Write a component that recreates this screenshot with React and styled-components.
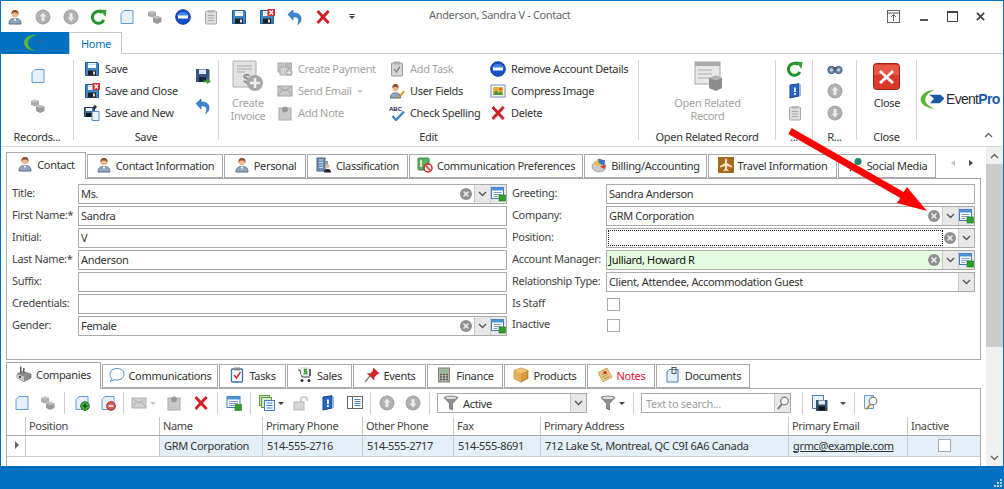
import React from "react";
import styled, { createGlobalStyle } from "styled-components";

const Blue = "#0070c0";
const Line = "#ababab";

const Global = createGlobalStyle`
  html, body { margin: 0; padding: 0; background: #fff; }
  body { font-family: "Noto Sans", "Liberation Sans", sans-serif; font-size: 11px; letter-spacing: -0.33px; color: #333; }
  * { box-sizing: border-box; }
`;

const Svg = styled.svg`
  display: block;
  flex: none;
  ${(p) => p.$off && "filter: grayscale(1); opacity: .85;"}
`;

const floppyBase = (
  <>
    <path d="M1.5 1.5h12l1 1v12h-13z" fill="#3f86c6" stroke="#1f5c99" />
    <rect x="4" y="2" width="8" height="5" fill="#fff" />
    <rect x="4" y="3.4" width="8" height=".7" fill="#9cc" />
    <rect x="4" y="9.5" width="8" height="5" fill="#222" />
    <rect x="9" y="10.5" width="2" height="3" fill="#ddd" />
  </>
);
const pagePath = <path d="M5 1.5h9v13H2V4.5z" fill="#e6f1fb" stroke="#5f9fd6" />;

const shapes = {
  person: (
    <>
      <path d="M2 15c0-4 2-5.5 6-5.5s6 1.500 6 5.500z" fill="#8ea6bf" stroke="#5b6f85" />
      <path d="M6.500 9.500h3L8 12.500z" fill="#fff" />
      <circle cx="8" cy="5" r="3.300" fill="#eab78f" />
      <path d="M4.500 6C4 2.500 5.500 1 8 1s4 1.500 3.500 5C11 3.800 10 3.400 8 3.400S5 3.800 4.500 6z" fill="#8a4f26" />
    </>
  ),
  up: (
    <>
      <circle cx="8" cy="8" r="7" fill="#a3a3a3" stroke="#8c8c8c" />
      <path d="M8 3.500 11.500 7.500H9.500V12h-3V7.500H4.500z" fill="#e8e8e8" />
    </>
  ),
  down: (
    <>
      <circle cx="8" cy="8" r="7" fill="#a3a3a3" stroke="#8c8c8c" />
      <path d="M8 12.500 4.500 8.500H6.500V4h3v4.500h2z" fill="#e8e8e8" />
    </>
  ),
  refresh: (
    <>
      <path d="M12.800 11A6 6 0 1 1 11 3.500" fill="none" stroke="#23922a" strokeWidth="3" />
      <path d="M8.500 0.500 15.500 1 14.500 8z" fill="#2fa52f" />
    </>
  ),
  page: pagePath,
  cubes: (
    <>
      <path d="M1 3 5 1.500 9 3v4L5 8.500 1 7z" fill="#9f9f9f" />
      <path d="M6 8.500 10 7l4.500 1.500v4.500L10 15l-4-2z" fill="#8a8a8a" />
      <path d="M6 8.500 10 10l4.500-1.500L10 7z" fill="#b5b5b5" />
      <path d="M1 3 5 4.500 9 3 5 1.500z" fill="#bdbdbd" />
    </>
  ),
  minus: (
    <>
      <circle cx="8" cy="8" r="7.300" fill="#1450c8" stroke="#0c3a99" />
      <path d="M2 7a6.500 6.500 0 0 1 12 0z" fill="#5c9af0" opacity=".7" />
      <rect x="3" y="6.500" width="10" height="3" fill="#fff" />
    </>
  ),
  clip: (
    <>
      <rect x="2.500" y="2" width="11" height="13" rx="1" fill="#d8d8d8" stroke="#9b9b9b" />
      <rect x="5" y="1" width="6" height="2.500" fill="#aaa" />
      <path d="M5 6.500h6M5 9h6M5 11.500h6" stroke="#999" />
    </>
  ),
  floppy: floppyBase,
  floppyX: (
    <>
      {floppyBase}
      <rect x="8.500" y="0" width="7.500" height="7" fill="#d32f2f" />
      <path d="m10.500 1.500 3.500 4m0-4-3.500 4" stroke="#fff" strokeWidth="1.300" />
    </>
  ),
  floppyNew: (
    <>
      <path d="M0.500 2.500h10v9h-10z" fill="#3f6fa3" stroke="#1f3f66" />
      <rect x="2" y="8" width="6" height="3.500" fill="#111" />
      <rect x="2" y="3" width="6" height="3" fill="#fff" />
      <path d="M8 6.500h7v9H8z" fill="#eaf3fb" stroke="#4d8fca" />
      <path d="M11 0v4M9 2h4" stroke="#111" strokeWidth="1.200" />
    </>
  ),
  floppyGo: (
    <>
      <path d="M1 1h12.500l1 1v12H1z" fill="#33557f" />
      <rect x="4" y="1.500" width="7" height="4.500" fill="#dfe8f2" />
      <rect x="4" y="9" width="7" height="5" fill="#16263c" />
      <path d="M8.500 12.500h3.500v-2.500l4 3.500-4 2.500v-1.500H8.500z" fill="#3fa535" />
    </>
  ),
  undo: (
    <path d="M1 5.500 6 1v3c5.500-.5 8.500 2.500 8 6.500-.3 2-1.500 4-3.500 5 1-1.500 1.500-3 1-5-.5-2-2.500-3-5.500-2.500V11z" fill="#3d86d0" stroke="#1d5ea3" strokeWidth=".6" />
  ),
  redX: <path d="M1.500 3 3.500 1 8 5.700 12.700 1 14.700 3 10 8l4.700 5-2 2L8 10.300 3.500 15l-2-2L6 8z" fill="#cf2027" />,
  cash: (
    <>
      <rect x="1" y="3" width="14" height="10" fill="#c9c9c9" stroke="#a5a5a5" />
      <path d="m1 13 4-6h6l4 6M1 3l7 5 7-5" fill="none" stroke="#a5a5a5" />
    </>
  ),
  note: (
    <>
      <rect x="2" y="3" width="12" height="12" fill="#c9c9c9" stroke="#aaa" />
      <circle cx="8" cy="4.500" r="3" fill="#9a9a9a" />
    </>
  ),
  payment: (
    <>
      <rect x="1" y="2" width="6" height="9" fill="#c8c8c8" stroke="#aaa" />
      <rect x="8.500" y="2" width="6" height="6" fill="#bbb" stroke="#aaa" />
      <rect x="3" y="6" width="8" height="8" fill="#d0d0d0" stroke="#aaa" />
      <circle cx="12" cy="11.500" r="3.500" fill="#b5b5b5" />
      <path d="M10 11.500h4M12 9.500v4" stroke="#eee" />
    </>
  ),
  task: (
    <>
      <rect x="2.500" y="2" width="11" height="13" rx="1" fill="#d5d5d5" stroke="#999" />
      <rect x="5" y="0.500" width="6" height="3" fill="#aaa" />
      <path d="m5 8 2.500 3L11 5.500" fill="none" stroke="#8a8a8a" strokeWidth="1.400" />
    </>
  ),
  userEdit: (
    <>
      <path d="M1.500 15c0-4 2-5 5-5s5 1 5 5z" fill="#8ea6bf" stroke="#5b6f85" />
      <circle cx="6.500" cy="5.500" r="3" fill="#eab78f" />
      <path d="M3.500 5.500C3 2 5 1 6.500 1s3.500 1 3 4.500C9 3.500 4 3.500 3.500 5.500z" fill="#8a4f26" />
      <path d="m9 14 5.500-6 1 1L10 15z" fill="#e3a41c" stroke="#a6710a" strokeWidth=".5" />
    </>
  ),
  spell: (
    <>
      <text x="0" y="5.500" fontSize="6" fontWeight="700" letterSpacing="0" fill="#223" fontFamily="Liberation Sans">ABC</text>
      <path d="M3.500 11 7 15 15 6.500" fill="none" stroke="#3d86d0" strokeWidth="2.400" />
    </>
  ),
  image: (
    <>
      <rect x="1" y="2" width="14" height="12" fill="#fff" stroke="#6f8fb5" />
      <rect x="3" y="4" width="10" height="8" fill="#e3b23c" />
      <path d="m3 12 3-5 3 3 2-2 2 4z" fill="#4d9a3a" />
      <circle cx="10.500" cy="6" r="1.200" fill="#d9531e" />
    </>
  ),
  bookBlue: (
    <>
      <path d="M3 2 12 .8V13l-9 2z" fill="#2a66c5" stroke="#173f86" />
      <path d="M12 1.500h2V13l-2 .5z" fill="#9ab8e0" />
      <rect x="7" y="4.500" width="1.800" height="4.500" fill="#fff" />
      <rect x="7" y="10" width="1.800" height="1.800" fill="#fff" />
    </>
  ),
  binoc: (
    <>
      <circle cx="4.500" cy="9" r="3.700" fill="#6a86ad" stroke="#4c6488" />
      <circle cx="11.500" cy="9" r="3.700" fill="#6a86ad" stroke="#4c6488" />
      <rect x="6.500" y="6" width="3" height="3" fill="#555" />
      <circle cx="4.500" cy="9" r="1.500" fill="#c8d6e8" />
      <circle cx="11.500" cy="9" r="1.500" fill="#c8d6e8" />
    </>
  ),
  classify: (
    <>
      <rect x="1" y="1" width="8" height="13" fill="#6f8fb5" stroke="#4c6488" />
      <path d="M3 3h4M3 5.500h4M3 8h4M3 10.500h4" stroke="#c9d8ea" />
      <rect x="9" y="4" width="3" height="5" fill="#9a9a9a" />
      <circle cx="11.500" cy="9" r="2" fill="#eab78f" />
      <path d="M8 15.500c0-2.500 1-3.500 3.500-3.500s3.500 1 3.500 3.500z" fill="#222" />
    </>
  ),
  noComm: (
    <>
      <rect x="1" y="1" width="11" height="12" rx="1" fill="#57b05a" stroke="#3e8c41" />
      <path d="M4 3v7" stroke="#fff" strokeWidth="1.500" />
      <circle cx="11" cy="11" r="4" fill="#fff" stroke="#d8232a" strokeWidth="1.500" />
      <path d="m8.500 8.500 5 5" stroke="#d8232a" strokeWidth="1.500" />
    </>
  ),
  billing: (
    <>
      <ellipse cx="8" cy="9.500" rx="7" ry="5.500" fill="#c9c9c9" stroke="#888" strokeWidth=".6" />
      <path d="M3 8 7 1.500 14 3.500 13 9z" fill="#f2b632" />
      <path d="M7 1.500 14 3.500 13 9 8 6z" fill="#3177cc" />
      <path d="M9 9.500 14.500 8l-1 4z" fill="#d8342c" />
    </>
  ),
  travel: (
    <>
      <rect x="0" y="0" width="16" height="16" fill="#a66a1c" />
      <path d="M8 1.500c.7 0 1 1 1 2v2.500l5 3v1.500l-5-1.500v3l1.500 1.200v1L8 13.500l-2.500.7v-1L7 12V9l-5 1.500V9l5-3V3.500c0-1 .3-2 1-2z" fill="#f5e3c0" />
    </>
  ),
  pin: (
    <>
      <path d="M3 14 9 7" stroke="#444" strokeWidth="1.200" />
      <circle cx="11" cy="4.500" r="3.500" fill="#18896a" />
    </>
  ),
  factory: (
    <>
      <path d="M1 8 6 5.500 15 8v4L8 15.500 1 12z" fill="#8b8b8b" stroke="#555" strokeWidth=".6" />
      <path d="M1 8 8 10.500V15.500L1 12z" fill="#c9c9c9" />
      <rect x="4" y="0.500" width="1.600" height="6" fill="#666" />
      <rect x="7" y="2" width="1.600" height="5" fill="#666" />
      <rect x="3" y="10" width="2" height="2" fill="#555" />
    </>
  ),
  bubble: (
    <path d="M8 1.500c4 0 7 2.300 7 5.700s-3 5.800-7 5.800c-1 0-2 0-3-.3L1.500 14.500l1.200-3C1.500 10.300 1 8.800 1 7.200 1 3.800 4 1.500 8 1.500z" fill="#fff" stroke="#4a8ccc" />
  ),
  tasks: (
    <>
      <rect x="2.500" y="2" width="11" height="13" rx="1" fill="#fff" stroke="#3b6ea8" strokeWidth="1.300" />
      <rect x="5" y="0.500" width="6" height="3" fill="#8a8a8a" />
      <path d="m5 8 2.500 3L11.500 5" fill="none" stroke="#d62a2a" strokeWidth="1.500" />
    </>
  ),
  sales: (
    <>
      <path d="M1 3h2l2 7h8" fill="none" stroke="#333" />
      <rect x="4" y="1" width="8" height="7" fill="#fff" stroke="#aaa" strokeWidth=".5" />
      <circle cx="5" cy="13.500" r="1.500" fill="#333" />
      <circle cx="12" cy="13.500" r="1.500" fill="#333" />
      <path d="M10 2.500H7.500v2h2v2H6.500" fill="none" stroke="#2a9a2a" strokeWidth="1.500" />
      <path d="M13 2v7" stroke="#333" strokeWidth="1.500" />
    </>
  ),
  pushpin: (
    <>
      <path d="M1 15 6 9" stroke="#777" strokeWidth="1.200" />
      <path d="M9.500 1 15 6.500l-2 .7-3 3 .2 2.800L3.500 6.500l2.800.2 3-3z" fill="#df2020" stroke="#9b1414" strokeWidth=".5" />
    </>
  ),
  calc: (
    <>
      <rect x="2.500" y="1" width="11" height="14" fill="#b5b5a8" stroke="#7f7f73" />
      <rect x="4" y="2.500" width="8" height="3" fill="#8fbf8f" />
      <path d="M4 7.500h2M7 7.500h2M10 7.500h2M4 10h2M7 10h2M10 10h2M4 12.500h2M7 12.500h2M10 12.500h2" stroke="#555" strokeWidth="1.300" />
    </>
  ),
  box: (
    <>
      <path d="M8 1 15 3.500v8L8 15 1 11.500v-8z" fill="#d9973a" stroke="#9a6114" strokeWidth=".6" />
      <path d="M1 3.500 8 6.500 15 3.500 8 1z" fill="#f0c274" />
      <path d="M8 6.500V15L1 11.500v-8z" fill="#e9ad55" />
    </>
  ),
  noteCard: (
    <>
      <path d="M1 5.500 10 1l5 9-9 5z" fill="#eac88a" stroke="#a67f3a" strokeWidth=".6" />
      <path d="m4.500 8 5-2.500M5.500 10l5-2.500M7 12l5-2.500" stroke="#a67f3a" strokeWidth=".7" />
      <circle cx="8" cy="5.500" r="1.600" fill="#d22" />
    </>
  ),
  doc: (
    <>
      <path d="M4 2.500h9v12.500H2V5z" fill="#e6f1fb" stroke="#3e7cbf" />
      <rect x="7" y="0.500" width="4" height="6" fill="none" stroke="#555" />
    </>
  ),
  addDoc: (
    <>
      {pagePath}
      <circle cx="11" cy="11" r="4.300" fill="#3fb23f" stroke="#24761f" />
      <path d="M8.500 11h5M11 8.500v5" stroke="#10320f" strokeWidth="1.200" />
    </>
  ),
  delDoc: (
    <>
      {pagePath}
      <circle cx="11" cy="11" r="4.300" fill="#df5b5b" stroke="#a02424" />
      <path d="M8.500 11h5" stroke="#fff" strokeWidth="1.500" />
    </>
  ),
  tableAdd: (
    <>
      <rect x="1" y="1.500" width="13" height="11" fill="#fff" stroke="#3f7ec0" />
      <rect x="1" y="1.500" width="13" height="3" fill="#4c92d8" />
      <path d="M3 6.500h9M3 8.500h9M3 10.500h5" stroke="#7d9dbf" />
      <rect x="9" y="9.500" width="6.500" height="6" fill="#2e9e2e" stroke="#1f7a1f" strokeWidth=".6" />
    </>
  ),
  multi: (
    <>
      <rect x="0.500" y="0.500" width="10" height="10" fill="#cfe6b8" stroke="#5c9a3a" />
      <rect x="2.500" y="2.500" width="10" height="10" fill="#d7ead0" stroke="#5c9a3a" />
      <rect x="5.500" y="5.500" width="10" height="10" fill="#fff" stroke="#3f7ec0" />
      <path d="M7.500 8h6M7.500 10.500h6M7.500 13h6" stroke="#3f7ec0" strokeWidth="1.200" />
    </>
  ),
  lockOpen: (
    <>
      <rect x="1" y="7" width="10" height="8" fill="#cfcfcf" stroke="#aaa" />
      <path d="M8 7V3.500C8 1.500 14 1 14 4v2" fill="none" stroke="#aaa" strokeWidth="1.300" />
    </>
  ),
  detail: (
    <>
      <rect x="0.500" y="1.500" width="15" height="12" fill="#fff" stroke="#666" />
      <path d="M5.500 1.500v12" stroke="#666" />
      <path d="M7.500 4.500h6M7.500 6.500h6M7.500 8.500h6M7.500 10.500h6" stroke="#3f7ec0" />
    </>
  ),
  funnel: (
    <>
      <path d="M1 2.500C4 .5 12 .5 15 2.500L9.500 8.500V15l-3-1.500v-5z" fill="#8f8f8f" stroke="#555" strokeWidth=".6" />
      <ellipse cx="8" cy="2.700" rx="5.500" ry="1.300" fill="#ddd" />
    </>
  ),
  saveLayout: (
    <>
      <rect x="0.500" y="0.500" width="11" height="13" fill="#e6f1fb" stroke="#4d7eb5" />
      <rect x="4" y="5" width="11.500" height="11" fill="#34506f" />
      <rect x="6.500" y="5.500" width="6.500" height="4" fill="#e2e8ef" />
      <rect x="6.500" y="11.500" width="6.500" height="4" fill="#111" />
    </>
  ),
  searchDoc: (
    <>
      <path d="M1.500.5h9v13h-9z" fill="#e6f1fb" stroke="#5f9fd6" />
      <circle cx="10" cy="6" r="3.800" fill="#fff" stroke="#7a7a7a" strokeWidth="1.200" />
      <path d="M7.500 9 3.500 14.500" stroke="#c98a2c" strokeWidth="2" />
    </>
  ),
  magnify: (
    <>
      <circle cx="9.500" cy="6" r="3.800" fill="#f4f4f4" stroke="#7a7a7a" strokeWidth="1.200" />
      <path d="M6.800 9 3 14" stroke="#7a7a7a" strokeWidth="2" />
    </>
  ),
  addSmall: (
    <>
      <rect x="0.500" y="0.500" width="12" height="11" fill="#fff" stroke="#3f7ec0" />
      <rect x="0.500" y="0.500" width="12" height="3" fill="#4c92d8" />
      <path d="M2.500 5.500h8M2.500 7.500h8M2.500 9.500h4" stroke="#7d9dbf" />
      <rect x="8" y="8" width="6.500" height="6" fill="#2e9e2e" stroke="#1f7a1f" strokeWidth=".6" />
    </>
  ),
  clear: (
    <>
      <circle cx="6" cy="6" r="6" fill="#8f8f8f" />
      <path d="m3.500 3.500 5 5m0-5-5 5" stroke="#f2f2f2" strokeWidth="1.500" />
    </>
  ),
};

const Ico = ({ n, s = 16, off, box = 16 }) => (
  <Svg $off={off} width={s} height={s} viewBox={`0 0 ${box} ${box}`} aria-hidden="true">
    {shapes[n]}
  </Svg>
);

const Window = styled.div`
  width: 1004px;
  height: 489px;
  display: flex;
  flex-direction: column;
  border: 1px solid ${Blue};
  border-bottom: 0;
  overflow: hidden;
  position: relative;
`;

const TitleBar = styled.div`
  height: 31px;
  display: flex;
  align-items: center;
  position: relative;
  flex: none;
`;

const QuickBtn = styled.div`
  width: 28px;
  height: 28px;
  display: flex;
  align-items: center;
  justify-content: center;
`;

const Caret = styled.span`
  display: inline-block;
  width: 0;
  height: 0;
  border-left: 3px solid transparent;
  border-right: 3px solid transparent;
  border-top: 3px solid ${(p) => p.$c || "#444"};
  flex: none;
`;

const QuickMenu = styled.div`
  width: 6px;
  margin-left: 12px;
  display: flex;
  flex-direction: column;
  align-items: center;
  border-top: 1px solid #555;
  padding-top: 1px;
`;

const Title = styled.div`
  position: absolute;
  left: 428px;
  top: 6px;
  font-size: 11px;
  line-height: 16px;
  color: #666;
  white-space: nowrap;
`;

const WinBtns = styled.div`
  margin-left: auto;
  display: flex;
  align-items: center;
  padding-right: 18px;
  gap: 18px;
`;

const PinBtn = styled.div`
  margin-right: 2px;
`;

const TabsBar = styled.div`
  height: 22px;
  display: flex;
  border-bottom: 1px solid #c8c8c8;
  flex: none;
`;

const FileTab = styled.div`
  width: 68px;
  height: 22px;
  background: ${Blue};
  display: flex;
  align-items: center;
  justify-content: center;
`;

const HomeTab = styled.div`
  width: 53px;
  height: 22px;
  background: #fff;
  border: 1px solid #c8c8c8;
  border-bottom: 0;
  color: #0072c6;
  padding-left: 11px;
  line-height: 21px;
`;

const Ribbon = styled.div`
  height: 93px;
  display: flex;
  padding-top: 4px;
  border-bottom: 1px solid #d8d8d8;
  flex: none;
  background: #fff;
`;

const Group = styled.div`
  width: ${(p) => p.$w}px;
  height: 86px;
  display: flex;
  flex-direction: column;
  position: relative;
  flex: none;
  &::after {
    content: "";
    position: absolute;
    right: 0;
    top: 2px;
    bottom: 4px;
    width: 1px;
    background: #d6d6d6;
  }
`;

const GroupBody = styled.div`
  height: 72px;
  display: flex;
  padding-left: ${(p) => p.$pad || 0}px;
  justify-content: ${(p) => (p.$center ? "center" : "flex-start")};
`;

const GroupLabel = styled.div`
  height: 14px;
  line-height: 14px;
  text-align: center;
  padding-right: 1px;
  white-space: nowrap;
  overflow: hidden;
`;

const Column = styled.div`
  width: ${(p) => p.$w}px;
  display: flex;
  flex-direction: column;
  flex: none;
`;

const SmallBtn = styled.div`
  height: 22px;
  display: flex;
  align-items: center;
  gap: 5px;
  white-space: nowrap;
  color: ${(p) => (p.$off ? "#a3a3a3" : "#333")};
  line-height: 20px;
`;

const BtnText = styled.span`
  margin-top: -1px;
`;

const IconStack = styled.div`
  width: ${(p) => p.$w || 30}px;
  display: flex;
  flex-direction: column;
  align-items: center;
  padding-top: ${(p) => p.$top ?? 3}px;
  flex: none;
`;

const IconSlot = styled.div`
  height: ${(p) => p.$h || 30}px;
  display: flex;
  align-items: center;
`;

const LargeBtn = styled.div`
  width: ${(p) => p.$w}px;
  display: flex;
  flex-direction: column;
  align-items: center;
  padding-top: ${(p) => p.$top ?? 2}px;
  text-align: center;
  line-height: 13px;
  flex: none;
  color: ${(p) => (p.$off ? "#a3a3a3" : "#333")};
  span {
    display: block;
    margin-top: ${(p) => p.$gap ?? 4}px;
  }
`;

const LogoBox = styled.div`
  width: 86px;
  height: 86px;
  position: relative;
  display: flex;
  align-items: flex-start;
  padding: 32px 0 0 2px;
`;

const LogoText = styled.div`
  font-family: "Liberation Sans", sans-serif;
  font-size: 14px;
  letter-spacing: -0.7px;
  line-height: 19px;
  color: #2c2c34;
  b {
    color: #1b5aa8;
  }
`;

const Collapse = styled.div`
  position: absolute;
  right: 10px;
  bottom: 6px;
`;

const Main = styled.div`
  flex: 1;
  display: flex;
  min-height: 0;
`;

const Content = styled.div`
  width: 985px;
  padding: 5px 5px 0;
  display: flex;
  flex-direction: column;
`;

const TabStrip = styled.div`
  height: ${(p) => p.$h}px;
  display: flex;
  align-items: flex-end;
  gap: 1px;
  flex: none;
  position: relative;
  margin-top: ${(p) => p.$mt || 0}px;
`;

const Tab = styled.div`
  width: ${(p) => p.$w}px;
  height: ${(p) => (p.$active ? 27 : 24)}px;
  background: #fff;
  border: 1px solid ${Line};
  border-bottom: ${(p) => (p.$active ? "0" : `1px solid ${Line}`)};
  margin-bottom: ${(p) => (p.$active ? "-1px" : "0")};
  position: relative;
  z-index: ${(p) => (p.$active ? 1 : 0)};
  padding-bottom: ${(p) => (p.$active ? 4 : 2)}px;
  display: flex;
  align-items: center;
  justify-content: center;
  gap: 4px;
  white-space: nowrap;
  color: ${(p) => p.$c || "#333"};
  flex: none;
`;

const TabNav = styled.div`
  margin-left: 14px;
  height: 24px;
  display: flex;
  gap: 14px;
  align-items: center;
  padding-bottom: 2px;
  align-self: flex-start;
`;

const NavArrow = styled.span`
  width: 0;
  height: 0;
  border-top: 3.500px solid transparent;
  border-bottom: 3.500px solid transparent;
  ${(p) => (p.$left ? "border-right: 4px solid #c2c2c2;" : "border-left: 4px solid #444;")}
`;

const FormPanel = styled.div`
  height: 182px;
  border: 1px solid ${Line};
  padding: 5px 5px 0;
  display: grid;
  grid-template-columns: 495px 463px;
  column-gap: 5px;
  flex: none;
`;

const FormCol = styled.div`
  display: flex;
  flex-direction: column;
  gap: 2px;
`;

const Row = styled.div`
  height: 20px;
  display: flex;
  align-items: center;
  margin-top: ${(p) => (p.$tight ? "-1px" : "0")};
`;

const Label = styled.div`
  width: ${(p) => p.$w}px;
  white-space: nowrap;
  flex: none;
  color: #444;
  line-height: 16px;
  padding-bottom: 2px;
`;

const FieldBox = styled.div`
  flex: 1;
  height: 20px;
  border: 1px solid ${Line};
  background: ${(p) => (p.$green ? "#e4fcdf" : "#fff")};
  display: flex;
  align-items: center;
  min-width: 0;
`;

const FieldText = styled.div`
  flex: 1;
  margin: 0 1px;
  height: 16px;
  line-height: 13px;
  white-space: nowrap;
  color: ${(p) => (p.$green ? "#111" : "#333")};
  border: ${(p) => (p.$focus ? "1px dotted #222" : "1px solid transparent")};
`;

const ClearBtn = styled.div`
  width: 12px;
  margin-right: 2px;
  flex: none;
`;

const FieldBtn = styled.div`
  width: 16px;
  height: 18px;
  background: #e8e8e8;
  border-left: 1px solid #c9c9c9;
  display: flex;
  align-items: center;
  justify-content: center;
  flex: none;
`;

const Chevron = ({ c = "#555", up }) => (
  <Svg width="9" height="6" viewBox="0 0 9 6" aria-hidden="true">
    <path d={up ? "M1 5 4.500 1.500 8 5" : "M1 1 4.500 4.500 8 1"} fill="none" stroke={c} strokeWidth="1.400" />
  </Svg>
);

const Field = ({ value, clear, drop, add, green, focus }) => (
  <FieldBox $green={green}>
    <FieldText $focus={focus} $green={green}>{value}</FieldText>
    {clear && (
      <ClearBtn>
        <Ico n="clear" s={12} box={12} />
      </ClearBtn>
    )}
    {drop && (
      <FieldBtn>
        <Chevron />
      </FieldBtn>
    )}
    {add && (
      <FieldBtn>
        <Ico n="addSmall" s={15} box={15} />
      </FieldBtn>
    )}
  </FieldBox>
);

const Check = styled.div`
  width: 13px;
  height: 13px;
  background: #fff;
  border: 1px solid ${Line};
  margin-left: ${(p) => p.$ml || 0}px;
`;

const GridPanel = styled.div`
  flex: 1;
  min-height: 0;
  border: 1px solid ${Line};
  border-bottom: 0;
`;

const Toolbar = styled.div`
  height: 28px;
  display: flex;
  align-items: center;
  padding-left: 2px;
`;

const ToolBtn = styled.div`
  width: ${(p) => p.$w || 26}px;
  height: 24px;
  display: flex;
  align-items: center;
  justify-content: center;
  gap: ${(p) => p.$gap ?? 3}px;
  padding-left: ${(p) => p.$pl || 0}px;
  flex: none;
`;

const ToolSep = styled.div`
  width: 1px;
  height: 22px;
  background: #cfcfcf;
  margin: 0 3px 0 ${(p) => p.$ml ?? 3}px;
  flex: none;
`;

const Combo = styled.div`
  width: 150px;
  height: 20px;
  margin-left: 4px;
  border: 1px solid ${Line};
  display: flex;
  align-items: center;
  gap: 4px;
  padding-left: 5px;
  flex: none;
  > span {
    flex: 1;
  }
`;

const SearchBox = styled.div`
  width: 150px;
  height: 20px;
  margin: 0 11px 0 4px;
  border: 1px solid ${Line};
  display: flex;
  align-items: center;
  color: #a0a0a0;
  padding-left: 4px;
  flex: none;
  > span {
    flex: 1;
  }
`;

const GridRow = styled.div`
  display: grid;
  grid-template-columns: 19px 134px 103px 100px 91px 87px 248px 119px 72px;
  height: ${(p) => p.$h}px;
  border-bottom: 1px solid ${(p) => p.$line};
`;

const HeadCell = styled.div`
  border-right: 1px solid #c9c9c9;
  padding-left: 3px;
  line-height: 17px;
  white-space: nowrap;
  color: #444;
  &:last-child {
    border-right: 0;
  }
`;

const Cell = styled.div`
  border-right: 1px solid #c9c9c9;
  padding-left: ${(p) => (p.$ind ? 8 : 4)}px;
  padding-bottom: 2px;
  background: ${(p) => (p.$sel ? "#e3eff9" : "#fff")};
  display: flex;
  align-items: center;
  justify-content: ${(p) => (p.$mid ? "center" : "flex-start")};
  white-space: nowrap;
  &:last-child {
    border-right: 0;
    padding-left: 0;
  }
`;

const EmailLink = styled.span`
  text-decoration: underline;
`;

const RowMark = styled.span`
  width: 0;
  height: 0;
  border-top: 4px solid transparent;
  border-bottom: 4px solid transparent;
  border-left: 4px solid #666;
`;

const ScrollBar = styled.div`
  width: 17px;
  background: #f0f0f0;
  display: flex;
  flex-direction: column;
  align-items: center;
  flex: none;
`;

const ScrollEnd = styled.div`
  height: 17px;
  width: 100%;
  display: flex;
  align-items: center;
  justify-content: center;
  flex: none;
`;

const ScrollThumb = styled.div`
  width: 100%;
  height: 183px;
  background: #cdcdcd;
  flex: none;
`;

const ScrollGap = styled.div`
  flex: 1;
`;

const StatusBar = styled.div`
  height: 23px;
  margin: 0 -1px;
  background: ${Blue};
  flex: none;
  display: flex;
  justify-content: flex-end;
  align-items: flex-end;
  padding: 0 2px 2px 0;
`;

const Overlay = styled.svg`
  position: absolute;
  left: -1px;
  top: -1px;
  pointer-events: none;
  z-index: 5;
`;

const quick = ["person", "up", "down", "refresh", "page", "cubes", "minus", "clip", "floppy", "floppyX", "undo", "redX"];
const off = new Set(["up", "down", "clip", "cubes"]);

const topTabs = [
  ["Contact", "person", 80, true],
  ["Contact Information", "person", 136],
  ["Personal", "person", 82],
  ["Classification", "classify", 101],
  ["Communication Preferences", "noComm", 174],
  ["Billing/Accounting", "billing", 123],
  ["Travel Information", "travel", 129],
  ["Social Media", "pin", 98],
];

const lowerTabs = [
  ["Companies", "factory", 95, true],
  ["Communications", "bubble", 116],
  ["Tasks", "tasks", 67],
  ["Sales", "sales", 65],
  ["Events", "pushpin", 73],
  ["Finance", "calc", 76],
  ["Products", "box", 82],
  ["Notes", "noteCard", 68, false, "#ee1133"],
  ["Documents", "doc", 94],
];

const columns = ["", "Position", "Name", "Primary Phone", "Other Phone", "Fax", "Primary Address", "Primary Email", "Inactive"];

const Small = ({ n, off: dim, children }) => (
  <SmallBtn $off={dim}>
    <Ico n={n} />
    <BtnText>{children}</BtnText>
  </SmallBtn>
);

export default function App() {
  return (
    <>
      <Global />
      <Window>
        <TitleBar>
          {quick.map((n) => (
            <QuickBtn key={n}>
              <Ico n={n} off={off.has(n)} />
            </QuickBtn>
          ))}
          <QuickMenu>
            <Caret />
          </QuickMenu>
          <Title>Anderson, Sandra V - Contact</Title>
          <WinBtns>
            <PinBtn>
              <Svg width="13" height="13" viewBox="0 0 13 13" aria-hidden="true">
                <rect x=".5" y=".5" width="12" height="12" fill="none" stroke="#666" />
                <path d="M1 3h11M6.500 11V5M4 7l2.500-2.500L9 7" fill="none" stroke="#555" />
              </Svg>
            </PinBtn>
            <Svg width="9" height="9" viewBox="0 0 9 9" aria-hidden="true">
              <rect x="0" y="7" width="8" height="2" fill="#555" />
            </Svg>
            <Svg width="11" height="11" viewBox="0 0 11 11" aria-hidden="true">
              <rect x=".5" y=".5" width="10" height="10" fill="none" stroke="#444" />
              <rect x="0" y="0" width="11" height="2" fill="#444" />
            </Svg>
            <Svg width="9" height="9" viewBox="0 0 10 10" aria-hidden="true">
              <path d="m1 1 8 8m0-8-8 8" stroke="#444" strokeWidth="2" />
            </Svg>
          </WinBtns>
        </TitleBar>

        <TabsBar>
          <FileTab>
            <Svg width="24" height="18" viewBox="0 0 24 18" aria-hidden="true">
              <path d="M14 1C6 0 1 4 1 9s6 8 13 8c-5-1-9-3.500-9-8s4-7 9-8z" fill="#5cb531" />
              <path d="M12 7c3-2 7-2 11-2-1 3-4 6-8 5l2-2z" fill="#1f67b0" />
            </Svg>
          </FileTab>
          <HomeTab>Home</HomeTab>
        </TabsBar>

        <Ribbon>
          <Group $w={73}>
            <GroupBody $center>
              <IconStack>
                <IconSlot><Ico n="page" /></IconSlot>
                <IconSlot><Ico n="cubes" off /></IconSlot>
              </IconStack>
            </GroupBody>
            <GroupLabel>Records...</GroupLabel>
          </Group>

          <Group $w={145}>
            <GroupBody $pad={10}>
              <Column $w={104}>
                <Small n="floppy">Save</Small>
                <Small n="floppyX">Save and Close</Small>
                <Small n="floppyNew">Save and New</Small>
              </Column>
              <IconStack>
                <IconSlot><Ico n="floppyGo" /></IconSlot>
                <IconSlot><Ico n="undo" /></IconSlot>
              </IconStack>
            </GroupBody>
            <GroupLabel>Save</GroupLabel>
          </Group>

          <Group $w={420}>
            <GroupBody>
              <LargeBtn $w={58} $off>
                <Svg width="32" height="32" viewBox="0 0 32 32" aria-hidden="true">
                  <path d="M1 1h23v26H1z" fill="#e2e2e2" stroke="#b0b0b0" />
                  <path d="M5 6h15M5 9h15M5 12h8" stroke="#aaa" />
                  <text x="11" y="23" fontSize="13" fontWeight="700" fill="#8d8d8d" fontFamily="Liberation Sans">$</text>
                  <circle cx="23" cy="23" r="8" fill="#a8a8a8" />
                  <path d="M18 23h10M23 18v10" stroke="#eee" strokeWidth="2.500" />
                </Svg>
                <span>Create<br />Invoice</span>
              </LargeBtn>
              <Column $w={112}>
                <Small n="payment" off>Create Payment</Small>
                <SmallBtn $off><Ico n="cash" /><BtnText>Send Email</BtnText><Caret $c="#c8c8c8" /></SmallBtn>
                <Small n="note" off>Add Note</Small>
              </Column>
              <Column $w={101}>
                <Small n="task" off>Add Task</Small>
                <Small n="userEdit">User Fields</Small>
                <Small n="spell">Check Spelling</Small>
              </Column>
              <Column $w={140}>
                <Small n="minus">Remove Account Details</Small>
                <Small n="image">Compress Image</Small>
                <Small n="redX">Delete</Small>
              </Column>
            </GroupBody>
            <GroupLabel>Edit</GroupLabel>
          </Group>

          <Group $w={137}>
            <GroupBody $center>
              <LargeBtn $w={130} $off>
                <Svg width="32" height="32" viewBox="0 0 32 32" aria-hidden="true">
                  <rect x="3" y="2" width="25" height="22" fill="#e8e8e8" stroke="#a8a8a8" />
                  <rect x="3" y="2" width="25" height="4" fill="#aaa" />
                  <path d="M6 10h14M6 14h14M6 18h12" stroke="#aaa" />
                  <path d="M17 18 24 15.500 30 18v10l-6 3-7-3z" fill="#8d8d8d" />
                  <path d="M17 18 24 20.500 30 18 24 15.500z" fill="#b5b5b5" />
                </Svg>
                <span>Open Related<br />Record</span>
              </LargeBtn>
            </GroupBody>
            <GroupLabel>Open Related Record</GroupLabel>
          </Group>

          <Group $w={37}>
            <GroupBody $center>
              <IconStack $w={36} $top={0}>
                <IconSlot $h={22}><Ico n="refresh" /></IconSlot>
                <IconSlot $h={22}><Ico n="bookBlue" /></IconSlot>
                <IconSlot $h={22}><Ico n="clip" off /></IconSlot>
              </IconStack>
            </GroupBody>
            <GroupLabel>...</GroupLabel>
          </Group>

          <Group $w={44}>
            <GroupBody $center>
              <IconStack $w={43} $top={0}>
                <IconSlot $h={22}><Ico n="binoc" /></IconSlot>
                <IconSlot $h={22}><Ico n="up" off /></IconSlot>
                <IconSlot $h={22}><Ico n="down" off /></IconSlot>
              </IconStack>
            </GroupBody>
            <GroupLabel>R...</GroupLabel>
          </Group>

          <Group $w={60}>
            <GroupBody $center>
              <LargeBtn $w={59} $top={5} $gap={6}>
                <Svg width="28" height="27" viewBox="0 0 28 27" aria-hidden="true">
                  <rect x=".5" y=".5" width="26" height="26" rx="3" fill="#d93a2b" stroke="#9e1f14" />
                  <path d="M1 2h25v10H1z" fill="#ee6a55" opacity=".6" />
                  <path d="m8 7 5.500 5.500L19 7l2 2-5.500 5 5.500 5-2 2-5.500-5L8 21l-2-2 5.500-5L6 9z" fill="#fff" />
                </Svg>
                <span>Close</span>
              </LargeBtn>
            </GroupBody>
            <GroupLabel>Close</GroupLabel>
          </Group>

          <LogoBox>
            <Svg width="27" height="19" viewBox="0 0 27 20" aria-hidden="true">
              <path d="M16 0C7 0 1 5 1 10s6 9 15 10C9 17 6 14 6 10s4-8 10-10z" fill="#5cb531" />
              <path d="M10 5h12l4 4-5 5H11l4-5z" fill="#1b5aa8" />
            </Svg>
            <LogoText>Event<b>Pro</b></LogoText>
            <Collapse><Chevron c="#666" up /></Collapse>
          </LogoBox>
        </Ribbon>

        <Main>
          <Content>
            <TabStrip $h={26}>
              {topTabs.map(([t, n, w, a]) => (
                <Tab key={t} $w={w} $active={a}>
                  <Ico n={n} />
                  {t}
                </Tab>
              ))}
              <TabNav>
                <NavArrow $left />
                <NavArrow />
              </TabNav>
            </TabStrip>

            <FormPanel>
              <FormCol>
                <Row><Label $w={66}>Title:</Label><Field value="Ms." clear drop add /></Row>
                <Row><Label $w={66}>First Name:*</Label><Field value="Sandra" /></Row>
                <Row><Label $w={66}>Initial:</Label><Field value="V" /></Row>
                <Row><Label $w={66}>Last Name:*</Label><Field value="Anderson" /></Row>
                <Row><Label $w={66}>Suffix:</Label><Field /></Row>
                <Row><Label $w={66}>Credentials:</Label><Field /></Row>
                <Row><Label $w={66}>Gender:</Label><Field value="Female" clear drop add /></Row>
              </FormCol>
              <FormCol>
                <Row><Label $w={94}>Greeting:</Label><Field value="Sandra Anderson" /></Row>
                <Row><Label $w={94}>Company:</Label><Field value="GRM Corporation" clear drop add /></Row>
                <Row><Label $w={94}>Position:</Label><Field focus clear drop /></Row>
                <Row><Label $w={94}>Account Manager:</Label><Field value="Julliard, Howard R" green clear drop add /></Row>
                <Row><Label $w={94}>Relationship Type:</Label><Field value="Client, Attendee, Accommodation Guest" drop /></Row>
                <Row><Label $w={94}>Is Staff</Label><Check $ml={1} /></Row>
                <Row $tight><Label $w={94}>Inactive</Label><Check $ml={1} /></Row>
              </FormCol>
            </FormPanel>

            <TabStrip $h={26} $mt={2}>
              {lowerTabs.map(([t, n, w, a, c]) => (
                <Tab key={t} $w={w} $active={a} $c={c}>
                  <Ico n={n} />
                  {t}
                </Tab>
              ))}
            </TabStrip>

            <GridPanel>
              <Toolbar>
                <ToolBtn><Ico n="page" /></ToolBtn>
                <ToolBtn><Ico n="cubes" off /></ToolBtn>
                <ToolSep />
                <ToolBtn $w={27}><Ico n="addDoc" /></ToolBtn>
                <ToolBtn $w={25}><Ico n="delDoc" /></ToolBtn>
                <ToolSep />
                <ToolBtn $w={33}><Ico n="cash" off /><Caret $c="#c8c8c8" /></ToolBtn>
                <ToolBtn $w={28}><Ico n="note" /></ToolBtn>
                <ToolBtn><Ico n="redX" /></ToolBtn>
                <ToolSep />
                <ToolBtn><Ico n="tableAdd" /></ToolBtn>
                <ToolSep />
                <ToolBtn $w={34}><Ico n="multi" /><Caret /></ToolBtn>
                <ToolBtn><Ico n="lockOpen" off /></ToolBtn>
                <ToolBtn $w={28}><Ico n="bookBlue" /></ToolBtn>
                <ToolBtn $w={25}><Ico n="detail" /></ToolBtn>
                <ToolSep />
                <ToolBtn><Ico n="up" off /></ToolBtn>
                <ToolBtn><Ico n="down" off /></ToolBtn>
                <ToolSep />
                <Combo>
                  <Ico n="funnel" />
                  <span>Active</span>
                  <FieldBtn><Chevron /></FieldBtn>
                </Combo>
                <ToolBtn $w={43} $pl={7}><Ico n="funnel" /><Caret /></ToolBtn>
                <ToolSep />
                <SearchBox>
                  <span>Text to search...</span>
                  <FieldBtn><Ico n="magnify" /></FieldBtn>
                </SearchBox>
                <ToolSep $ml={0} />
                <ToolBtn $w={45} $gap={12}><Ico n="saveLayout" /><Caret /></ToolBtn>
                <ToolSep />
                <ToolBtn><Ico n="searchDoc" /></ToolBtn>
              </Toolbar>

              <GridRow $h={19} $line={Line}>
                {columns.map((c, i) => (
                  <HeadCell key={i}>{c}</HeadCell>
                ))}
              </GridRow>
              <GridRow $h={21} $line="#d0d0d0">
                <Cell $ind><RowMark /></Cell>
                <Cell />
                <Cell $sel>GRM Corporation</Cell>
                <Cell $sel>514-555-2716</Cell>
                <Cell $sel>514-555-2717</Cell>
                <Cell $sel>514-555-8691</Cell>
                <Cell $sel>712 Lake St, Montreal, QC C9I 6A6 Canada</Cell>
                <Cell $sel><EmailLink>grmc@example.com</EmailLink></Cell>
                <Cell $sel $mid><Check /></Cell>
              </GridRow>
            </GridPanel>
          </Content>

          <ScrollBar>
            <ScrollEnd><Chevron c="#666" up /></ScrollEnd>
            <ScrollThumb />
            <ScrollGap />
            <ScrollEnd><Chevron c="#666" /></ScrollEnd>
          </ScrollBar>
        </Main>

        <StatusBar>
          <Svg width="8" height="8" viewBox="0 0 8 8" aria-hidden="true">
            <path d="M6 0h2v2H6zM3 3h2v2H3zM6 3h2v2H6zM0 6h2v2H0zM3 6h2v2H3zM6 6h2v2H6z" fill="#b9d6ee" />
          </Svg>
        </StatusBar>

        <Overlay width="1004" height="489" viewBox="0 0 1004 489" aria-hidden="true">
          <path d="M791.700 128 903.700 192 907 187 927 211 897 203 900.300 198 788.300 134z" fill="#f00" />
        </Overlay>
      </Window>
    </>
  );
}
